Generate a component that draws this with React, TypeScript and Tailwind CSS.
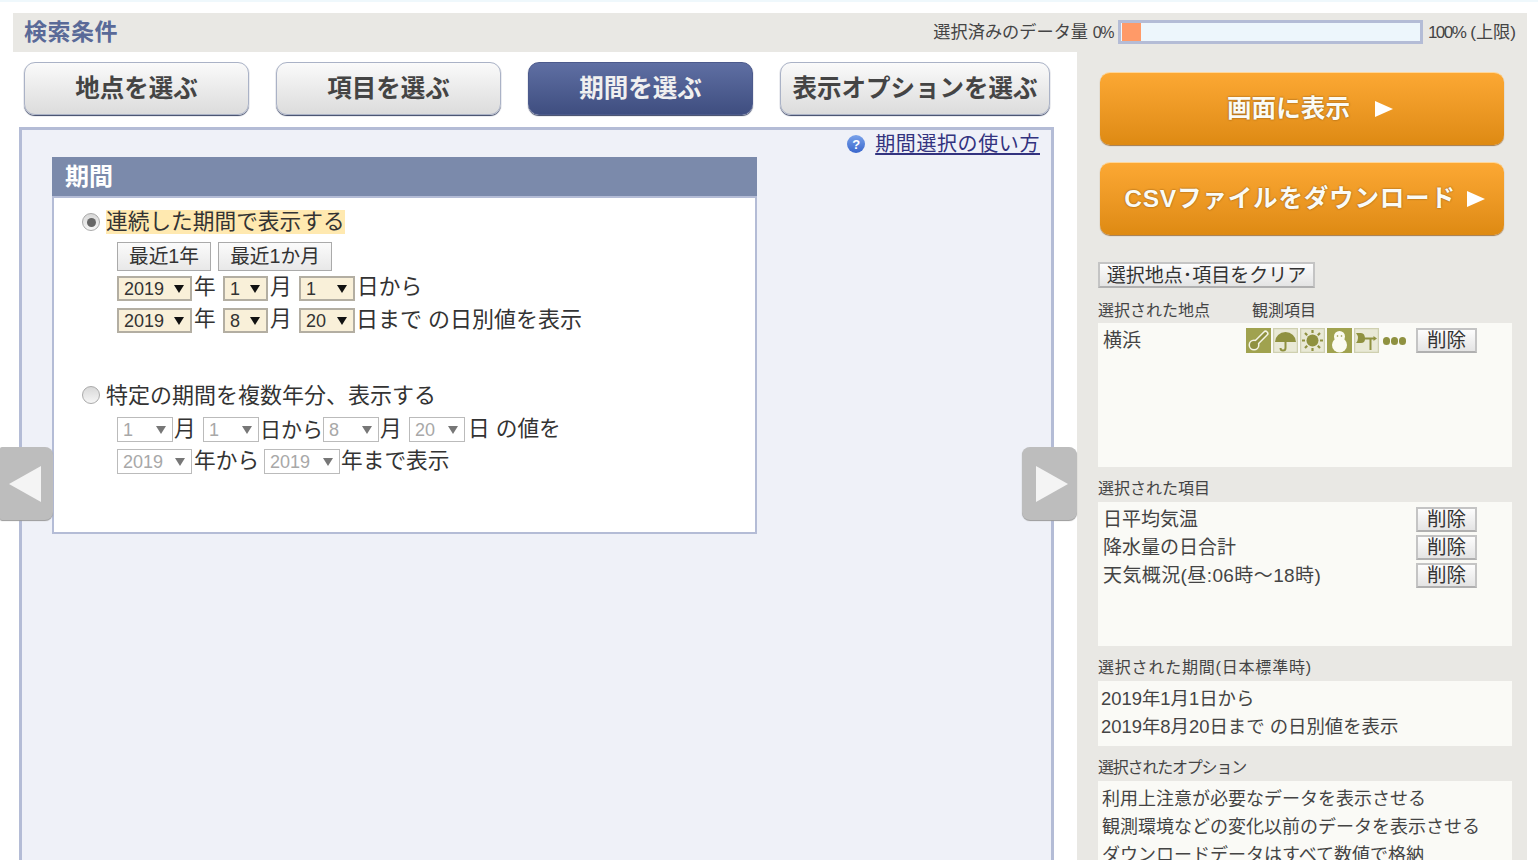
import React from "react";

const FONT = "font-['Liberation_Sans','Noto_Sans_CJK_JP',sans-serif]";

function Tab({ label, active, wide }: { label: string; active?: boolean; wide?: boolean }) {
  return (
    <div
      className={`h-[53px] pt-[2px] flex items-center justify-center rounded-[11px] border text-[24.5px] font-bold shadow-[0_1px_1px_#3a4464] ${wide ? "w-[270px]" : "w-[225px]"} ${
        active
          ? "border-[#4c5a8c] bg-gradient-to-b from-[#5f6fa3] to-[#3f4e80] text-[#f0f0f0]"
          : "border-[#aab2c6] bg-gradient-to-b from-[#fafafa] to-[#dcdcdc] text-[#444444]"
      }`}
    >
      {label}
    </div>
  );
}

function Radio({ checked }: { checked?: boolean }) {
  return (
    <span className="w-[18px] h-[18px] rounded-full border border-[#aaaaaa] bg-gradient-to-b from-[#d8d8d8] to-[#f6f6f6] flex items-center justify-center shrink-0">
      {checked && <span className="w-[9px] h-[9px] rounded-full bg-[#666666]" />}
    </span>
  );
}

function Sel({ v, w, off }: { v: string; w: string; off?: boolean }) {
  return (
    <span
      className={`h-[25px] flex items-center justify-between pl-[5px] pr-[6px] text-[18px] leading-none shrink-0 ${w} ${
        off
          ? "border border-[#bbbbbb] bg-white text-[#a8a8a8]"
          : "border-2 border-[#b3aea2] bg-[#f9f0d9] text-[#333333]"
      }`}
    >
      <span>{v}</span>
      <svg className="w-[10px] h-[8px]" viewBox="0 0 10 8">
        <path d="M0 0 H10 L5 8 Z" fill={off ? "#777777" : "#111111"} />
      </svg>
    </span>
  );
}

function SmallBtn({ children, w }: { children: React.ReactNode; w: string }) {
  return (
    <div className={`flex items-center justify-center border-2 border-[#c4c4c4] border-b-[#b0b0b0] bg-gradient-to-b from-[#fdfdfd] to-[#e4e4e4] leading-none text-[#333333] whitespace-nowrap shrink-0 ${w}`}>
      {children}
    </div>
  );
}

function OrangeBtn({ label, gap, extra }: { label: string; gap: string; extra: string }) {
  return (
    <div className="h-[73px] w-[404px] flex items-center justify-center rounded-[10px] bg-gradient-to-b from-[#fca833] to-[#de8a12] border-t border-[#ffd79a] shadow-[0_1px_1px_#a3794a] text-[#fbfbf5]">
      <span className={`text-[24.6px] font-bold whitespace-nowrap [text-shadow:0_0_2px_#7a4a10] ${extra}`}>{label}</span>
      <svg className={`w-[18px] h-[18px] ${gap}`} viewBox="0 0 18 18"><path d="M0 1 L18 9 L0 17 Z" fill="#ffffff" /></svg>
    </div>
  );
}

function Icon({ dark, children }: { dark?: boolean; children: React.ReactNode }) {
  return (
    <svg className="w-[25px] h-[25px] shrink-0 mr-[2px]" viewBox="0 0 25 25">
      <rect x="0.5" y="0.5" width="24" height="24" fill={dark ? "#a0a24f" : "#e9e9d6"} stroke={dark ? "#a0a24f" : "#cfd0b0"} strokeWidth="1.5" />
      {children}
    </svg>
  );
}

const OL = "#8f9140";

function Label({ children, extra }: { children: React.ReactNode; extra?: string }) {
  return <div className={`h-[26px] pt-[2px] flex items-center text-[16px] text-[#444444] whitespace-nowrap ${extra ?? ""}`}>{children}</div>;
}

export default function App() {
  return (
    <div className={`relative w-[1538px] h-[860px] overflow-hidden bg-white ${FONT}`}>
      <div className="h-[2px] bg-[#eff8fc]" />
      <div className="mt-[11px] ml-[13px] w-[1514px]">
        <div className="h-[39px] bg-[#e9e8e4] flex items-center justify-between pl-[11px] pr-[11px]">
          <span className="text-[23px] font-bold text-[#5a6a98] tracking-[0.5px]">検索条件</span>
          <div className="flex items-center text-[17.2px] text-[#444444] whitespace-nowrap">
            <span>選択済みのデータ量 <span className="text-[16px] tracking-[-1.5px]">0%</span></span>
            <div className="ml-[5px] w-[305px] h-[24px] border-[3px] border-[#b4bcd6] bg-[#edf6fc]">
              <div className="ml-[1px] w-[19px] h-full bg-[#ff9a68]" />
            </div>
            <span className="ml-[5px]"><span className="text-[17px] tracking-[-1.5px]">100%</span> (上限)</span>
          </div>
        </div>

        <div className="flex">
          <div className="w-[1064px] pt-[10px]">
            <div className="flex gap-[27px] ml-[11px]">
              <Tab label="地点を選ぶ" />
              <Tab label="項目を選ぶ" />
              <Tab label="期間を選ぶ" active />
              <Tab label="表示オプションを選ぶ" wide />
            </div>
            <div className="mt-[12px] ml-[6px] w-[1035px] h-[740px] border-[3px] border-[#b4bcd6] bg-[#eff1f8]">
              <div className="h-[27px] flex items-center justify-end pr-[11px] pt-[1px]">
                <span className="w-[18px] h-[18px] rounded-full bg-gradient-to-b from-[#7aa2ea] to-[#3a66cc] text-white text-[13px] font-bold flex items-center justify-center leading-none">?</span>
                <span className="ml-[10px] text-[20px] leading-[27px] tracking-[0.6px] text-[#33337f] underline underline-offset-[2px]">期間選択の使い方</span>
              </div>
              <div className="ml-[30px] w-[705px]">
                <div className="h-[39px] bg-[#7b8aab] flex items-center pl-[13px] text-[24px] font-bold text-white">期間</div>
                <div className="h-[338px] bg-white border-2 border-[#b4bcd6] pl-[28px] pt-[12px] text-[21.7px] text-[#333333]">
                  <div className="flex items-center h-[24px] gap-[6px]">
                    <Radio checked />
                    <span className="bg-[#ffe9b0] h-[24px] leading-[24px]">連続した期間で表示する</span>
                  </div>
                  <div className="ml-[35px] mt-[8px] flex gap-[7px] text-[19.7px]">
                    <div className="w-[94px] h-[29px] flex items-center justify-center border border-[#aaaaaa] bg-gradient-to-b from-[#fbfbfb] to-[#e8e8e8]">最近1年</div>
                    <div className="w-[114px] h-[29px] flex items-center justify-center border border-[#aaaaaa] bg-gradient-to-b from-[#fbfbfb] to-[#e8e8e8]">最近1か月</div>
                  </div>
                  <div className="ml-[35px] mt-[5px] flex items-center h-[25px]">
                    <Sel v="2019" w="w-[75px]" />
                    <span className="ml-[2px] w-[29px] pb-[2px]">年</span>
                    <Sel v="1" w="w-[45px]" />
                    <span className="ml-[2px] w-[29px] pb-[2px]">月</span>
                    <Sel v="1" w="w-[56px]" />
                    <span className="ml-[2px] pb-[2px] whitespace-nowrap">日から</span>
                  </div>
                  <div className="ml-[35px] mt-[7px] flex items-center h-[25px]">
                    <Sel v="2019" w="w-[75px]" />
                    <span className="ml-[2px] w-[29px] pb-[2px]">年</span>
                    <Sel v="8" w="w-[45px]" />
                    <span className="ml-[2px] w-[29px] pb-[2px]">月</span>
                    <Sel v="20" w="w-[56px]" />
                    <span className="ml-[1px] pb-[2px] whitespace-nowrap text-[22px]">日まで の日別値を表示</span>
                  </div>
                  <div className="flex items-center h-[24px] gap-[6px] mt-[50px]">
                    <Radio />
                    <span className="text-[22px] whitespace-nowrap">特定の期間を複数年分、表示する</span>
                  </div>
                  <div className="ml-[35px] mt-[10px] flex items-center h-[25px]">
                    <Sel v="1" w="w-[56px]" off />
                    <span className="ml-[1px] w-[29px]">月</span>
                    <Sel v="1" w="w-[56px]" off />
                    <span className="ml-[1px] w-[63px] whitespace-nowrap text-[21px]">日から</span>
                    <Sel v="8" w="w-[56px]" off />
                    <span className="ml-[1px] w-[29px]">月</span>
                    <Sel v="20" w="w-[56px]" off />
                    <span className="ml-[3px] whitespace-nowrap">日 の値を</span>
                  </div>
                  <div className="ml-[35px] mt-[7px] flex items-center h-[25px]">
                    <Sel v="2019" w="w-[75px]" off />
                    <span className="ml-[2px] w-[70px] whitespace-nowrap">年から</span>
                    <Sel v="2019" w="w-[76px]" off />
                    <span className="ml-[1px] whitespace-nowrap">年まで表示</span>
                  </div>
                </div>
              </div>
            </div>
          </div>

          <div className="w-[450px] h-[808px] bg-[#e9e8e4] pl-[21px]">
            <div className="pl-[2px] pt-[20px] flex flex-col gap-[17px]">
              <OrangeBtn label="画面に表示" gap="ml-[25px]" extra="ml-[16px]" />
              <OrangeBtn label="CSVファイルをダウンロード" gap="ml-[11px]" extra="tracking-[0.75px] ml-[5px]" />
            </div>
            <SmallBtn w="w-[217px] h-[26px] mt-[27px] text-[19px]">選択地点･項目をクリア</SmallBtn>
            <div className="mt-[9px] flex">
              <Label extra="w-[154px]">選択された地点</Label>
              <Label extra="text-[16.5px]">観測項目</Label>
            </div>
            <div className="w-[414px] h-[144px] bg-[#fafaf6] pl-[5px] pt-[5px] text-[19px] text-[#444444]">
              <div className="flex items-center h-[25px]">
                <span className="w-[143px] pt-[2px]">横浜</span>
                <Icon dark>
                  <path d="M19.5 5.5 L10 15" stroke="#f3f3e4" strokeWidth="6" strokeLinecap="round" />
                  <circle cx="8" cy="17" r="5.5" fill="#f3f3e4" />
                  <path d="M19.5 5.5 L10 15" stroke={OL} strokeWidth="3" strokeLinecap="round" />
                  <circle cx="8" cy="17" r="4" fill={OL} />
                </Icon>
                <Icon>
                  <path d="M2 14 A10.5 10 0 0 1 23 14 Z" fill={OL} />
                  <path d="M12.5 12 V20 A2.5 2.5 0 0 1 7.5 20" fill="none" stroke={OL} strokeWidth="2" />
                </Icon>
                <Icon>
                  <circle cx="12.5" cy="12.5" r="6" fill={OL} />
                  <path d="M12.5 2 V5 M12.5 20 V23 M2 12.5 H5 M20 12.5 H23 M5 5 L7.2 7.2 M17.8 17.8 L20 20 M5 20 L7.2 17.8 M17.8 7.2 L20 5" stroke={OL} strokeWidth="2.2" />
                </Icon>
                <Icon dark>
                  <circle cx="12.5" cy="8.5" r="5.5" fill="#fbfbf0" />
                  <circle cx="12.5" cy="17" r="7.5" fill="#fbfbf0" />
                  <circle cx="10.5" cy="8" r="0.8" fill={OL} />
                  <circle cx="14.5" cy="8" r="0.8" fill={OL} />
                </Icon>
                <Icon>
                  <path d="M2 5 H7 Q11 5 11 11 Q11 15 7 15 H2 Q6 10 2 5 Z" fill={OL} />
                  <path d="M10 10.5 H21 M16.5 10.5 V22" stroke={OL} strokeWidth="2" />
                  <path d="M19.5 8 L23 10.5 L19.5 13 Z" fill={OL} />
                </Icon>
                <span className="flex gap-[1px] ml-[2px] mr-[10px]">
                  <span className="w-[7px] h-[8px] rounded-full bg-[#8f9140]" />
                  <span className="w-[7px] h-[8px] rounded-full bg-[#8f9140]" />
                  <span className="w-[7px] h-[8px] rounded-full bg-[#8f9140]" />
                </span>
                <SmallBtn w="w-[61px] h-[25px] text-[19.5px]">削除</SmallBtn>
              </div>
            </div>

            <div className="mt-[8px]"><Label>選択された項目</Label></div>
            <div className="mt-[1px] w-[414px] h-[144px] bg-[#fafaf6] pl-[5px] pt-[5px] text-[19px] text-[#444444]">
              <div className="flex items-center h-[25px] mb-[3px]">
                <span className="w-[313px] pt-[2px] whitespace-nowrap">日平均気温</span>
                <SmallBtn w="w-[61px] h-[25px] text-[19.5px]">削除</SmallBtn>
              </div>
              <div className="flex items-center h-[25px] mb-[3px]">
                <span className="w-[313px] pt-[2px] whitespace-nowrap">降水量の日合計</span>
                <SmallBtn w="w-[61px] h-[25px] text-[19.5px]">削除</SmallBtn>
              </div>
              <div className="flex items-center h-[25px] mb-[3px]">
                <span className="w-[313px] pt-[2px] tracking-[0.4px] whitespace-nowrap">天気概況(昼:06時～18時)</span>
                <SmallBtn w="w-[61px] h-[25px] text-[19.5px]">削除</SmallBtn>
              </div>
            </div>

            <div className="mt-[8px]"><Label extra="tracking-[0.8px]">選択された期間(日本標準時)</Label></div>
            <div className="mt-[1px] w-[414px] h-[65px] bg-[#fafaf6] pl-[3px] pt-[4px] text-[18.4px] leading-[28px] text-[#444444]">
              <div>2019年1月1日から</div>
              <div>2019年8月20日まで の日別値を表示</div>
            </div>

            <div className="mt-[8px]"><Label extra="tracking-[-1.2px]">選択されたオプション</Label></div>
            <div className="mt-[1px] w-[414px] h-[90px] bg-[#fafaf6] pl-[4px] pt-[4px] text-[18px] leading-[28px] text-[#444444] whitespace-nowrap">
              <div>利用上注意が必要なデータを表示させる</div>
              <div>観測環境などの変化以前のデータを表示させる</div>
              <div>ダウンロードデータはすべて数値で格納</div>
            </div>
          </div>
        </div>
      </div>

      <div className="absolute left-0 top-[447px] w-[53px] h-[73px] pr-[3px] rounded-r-[8px] rounded-l-[2px] bg-[#bdbdbd] shadow-[0_1px_1px_#999999] flex items-center justify-center">
        <svg className="w-[32px] h-[36px]" viewBox="0 0 32 36"><path d="M0 18 L32 0 V36 Z" fill="#f4f4f4" /></svg>
      </div>
      <div className="absolute left-[1022px] top-[447px] w-[55px] h-[73px] pl-[5px] rounded-[8px] bg-[#bdbdbd] shadow-[0_1px_1px_#999999] flex items-center justify-center">
        <svg className="w-[32px] h-[36px]" viewBox="0 0 32 36"><path d="M0 0 L32 18 L0 36 Z" fill="#f4f4f4" /></svg>
      </div>
    </div>
  );
}
